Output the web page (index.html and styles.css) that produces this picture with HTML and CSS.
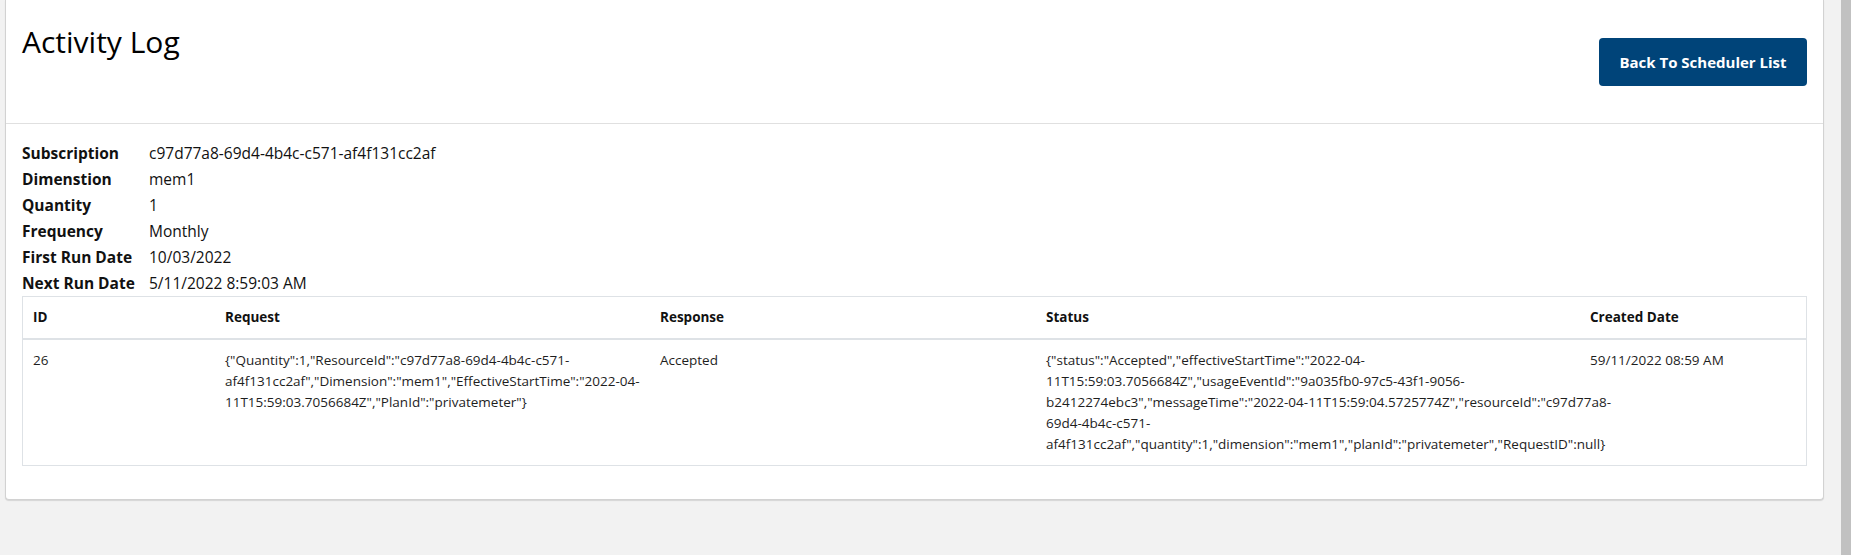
FILE: index.html
```html
<!DOCTYPE html>
<html lang="en">
<head>
<meta charset="utf-8">
<title>Activity Log</title>
<link rel="stylesheet" href="styles.css">
</head>
<body>
<div class="page">
  <div class="card">
    <div class="card-header">
      <h1 class="title">Activity Log</h1>
      <button class="btn-back" type="button">Back To Scheduler List</button>
    </div>
    <div class="card-body">
      <div class="details">
        <div class="label">Subscription</div><div class="value">c97d77a8-69d4-4b4c-c571-af4f131cc2af</div>
        <div class="label">Dimenstion</div><div class="value">mem1</div>
        <div class="label">Quantity</div><div class="value">1</div>
        <div class="label">Frequency</div><div class="value">Monthly</div>
        <div class="label">First Run Date</div><div class="value">10/03/2022</div>
        <div class="label">Next Run Date</div><div class="value">5/11/2022 8:59:03 AM</div>
      </div>
      <table class="log-table">
        <thead>
          <tr>
            <th class="col-id">ID</th>
            <th class="col-req">Request</th>
            <th class="col-resp">Response</th>
            <th class="col-status">Status</th>
            <th class="col-date">Created Date</th>
          </tr>
        </thead>
        <tbody>
          <tr>
            <td>26</td>
            <td class="json">{"Quantity":1,"ResourceId":"c97d77a8-69d4-4b4c-c571-<br>af4f131cc2af","Dimension":"mem1","EffectiveStartTime":"2022-04-<br>11T15:59:03.7056684Z","PlanId":"privatemeter"}</td>
            <td>Accepted</td>
            <td class="json">{"status":"Accepted","effectiveStartTime":"2022-04-<br>11T15:59:03.7056684Z","usageEventId":"9a035fb0-97c5-43f1-9056-<br>b2412274ebc3","messageTime":"2022-04-11T15:59:04.5725774Z","resourceId":"c97d77a8-<br>69d4-4b4c-c571-<br>af4f131cc2af","quantity":1,"dimension":"mem1","planId":"privatemeter","RequestID":null}</td>
            <td class="json">59/11/2022 08:59 AM</td>
          </tr>
        </tbody>
      </table>
    </div>
  </div>
</div>
<div class="scrollbar"></div>
</body>
</html>
```

FILE: styles.css
```css
html, body {
  margin: 0;
  padding: 0;
  height: 100%;
}
body {
  background: #f2f2f2;
  display: flex;
  font-family: "Open Sans", "Noto Sans", "Liberation Sans", sans-serif;
  color: #1e1e1e;
  overflow: hidden;
}
.page {
  flex: 1;
  padding: 0 17px 0 5px;
}
.scrollbar {
  width: 10px;
  background: #c1c1c1;
  height: 100%;
}
.card {
  background: #fff;
  border: 1px solid #d2d2d2;
  border-top: none;
  border-radius: 0 0 4px 4px;
  box-shadow: 0 1px 1px rgba(0,0,0,0.12);
}
.card-header {
  display: flex;
  justify-content: space-between;
  align-items: flex-start;
  padding: 23px 16px 37px 16px;
  border-bottom: 1px solid #e0e0e0;
}
.title {
  margin: 0;
  font-size: 30px;
  line-height: 38px;
  font-weight: 400;
  color: #000;
}
.btn-back {
  margin-top: 15px;
  width: 208px;
  height: 48px;
  background: #004479;
  color: #fff;
  border: none;
  border-radius: 4px;
  font-family: inherit;
  font-size: 15px;
  font-weight: 700;
  padding: 0;
}
.card-body {
  padding: 16px 16px 33px 16px;
}
.details {
  display: grid;
  grid-template-columns: 127px 1fr;
  font-size: 15.5px;
  line-height: 26px;
  color: #111;
}
.label {
  font-weight: 700;
}
.log-table {
  width: 100%;
  border-collapse: collapse;
  table-layout: fixed;
  border: 1px solid #dee2e6;
  font-size: 13.5px;
  line-height: 21px;
}
.log-table th {
  text-align: left;
  font-weight: 700;
  padding: 10px 10px;
  border-bottom: 2px solid #dee2e6;
  color: #111;
}
.log-table td {
  padding: 10px 10px;
  vertical-align: top;
  color: #1e1e1e;
}
.json {
  white-space: nowrap;
}
.col-id { width: 172px; }
.col-req { width: 415px; }
.col-resp { width: 366px; }
.col-status { width: 524px; }
.col-date { width: auto; }
```
